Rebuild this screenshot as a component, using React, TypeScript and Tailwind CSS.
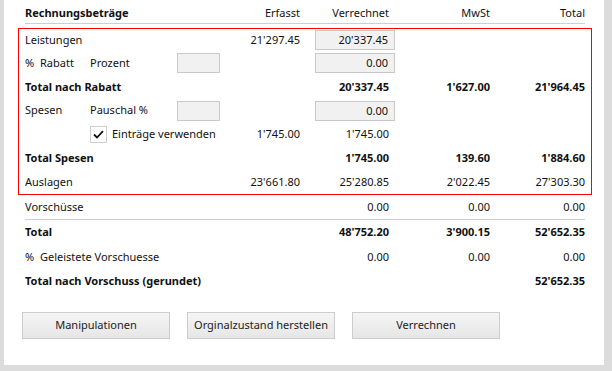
import React from "react";

type Row = {
  label: React.ReactNode;
  erfasst?: string;
  verrechnet?: string;
  mwst?: string;
  total?: string;
  bold?: boolean;
  box?: boolean;
  h: string;
};

function TextBox({ value }: { value?: string }) {
  return (
    <div className="h-[20px] w-[80px] border border-[#c9c9c9] bg-[#f1f1f1] pr-[6px] text-right leading-[18px]">
      {value}
    </div>
  );
}

function SmallBox() {
  return <div className="h-[20px] w-[43px] border border-[#c9c9c9] bg-[#f1f1f1]" />;
}

function Check() {
  return (
    <div className="flex h-[17px] w-[17px] shrink-0 items-center justify-center border border-[#cfcfcf] bg-white">
      <svg width="11" height="9" viewBox="0 0 11 9">
        <path d="M1 4.5 L4 7.5 L10 1.2" fill="none" stroke="#111" strokeWidth="1.8" />
      </svg>
    </div>
  );
}

function Line({ row }: { row: Row }) {
  const w = row.bold ? "font-bold" : "";
  return (
    <div className={`flex items-center whitespace-nowrap ${row.h} ${w}`}>
      <div className="flex w-[195px] items-center">{row.label}</div>
      <div className="w-[86px] pr-[6px] text-right">{row.erfasst}</div>
      <div className="flex w-[89px] justify-end">
        {row.box ? <TextBox value={row.verrechnet} /> : <span className="pr-[6px]">{row.verrechnet}</span>}
      </div>
      <div className="w-[95px] text-right">{row.mwst}</div>
      <div className="w-[95px] text-right">{row.total}</div>
    </div>
  );
}

const framed: Row[] = [
  { label: "Leistungen", erfasst: "21'297.45", verrechnet: "20'337.45", box: true, h: "h-[22px]" },
  {
    label: (
      <>
        <span className="w-[15px]">%</span>
        <span className="w-[50px]">Rabatt</span>
        <span className="w-[87px]">Prozent</span>
        <SmallBox />
      </>
    ),
    verrechnet: "0.00",
    box: true,
    h: "h-[24px]",
  },
  { label: "Total nach Rabatt", verrechnet: "20'337.45", mwst: "1'627.00", total: "21'964.45", bold: true, h: "h-[24px]" },
  {
    label: (
      <>
        <span className="w-[65px]">Spesen</span>
        <span className="w-[87px]">Pauschal %</span>
        <SmallBox />
      </>
    ),
    verrechnet: "0.00",
    box: true,
    h: "h-[23px]",
  },
  {
    label: (
      <>
        <span className="w-[65px]" />
        <Check />
        <span className="ml-[5px]">Einträge verwenden</span>
      </>
    ),
    erfasst: "1'745.00",
    verrechnet: "1'745.00",
    h: "h-[24px]",
  },
  { label: "Total Spesen", verrechnet: "1'745.00", mwst: "139.60", total: "1'884.60", bold: true, h: "h-[25px]" },
  { label: "Auslagen", erfasst: "23'661.80", verrechnet: "25'280.85", mwst: "2'022.45", total: "27'303.30", h: "h-[23px]" },
];

export default function App() {
  return (
    <div
      className="flex h-[371px] w-[612px] bg-[#dcdcdc] pb-[6px] pl-[4px] pr-[8px] text-[11px] text-[#111]"
      style={{ fontFamily: '"Segoe UI", "Noto Sans", sans-serif' }}
    >
      <div className="flex flex-1 flex-col bg-white pl-[14px] pt-[5px]">
        <div className="w-[574px]">
          <div className="mx-[7px] flex h-[19px] items-center border-b border-[#cfcfcf] pb-[2px]">
            <div className="w-[195px] font-bold">Rechnungsbeträge</div>
            <div className="w-[86px] pr-[6px] text-right">Erfasst</div>
            <div className="w-[89px] pr-[6px] text-right">Verrechnet</div>
            <div className="w-[95px] text-right">MwSt</div>
            <div className="w-[95px] text-right">Total</div>
          </div>
          <div className="mt-[4px] border border-[#ff0000] px-[6px]">
            {framed.map((r, i) => (
              <Line key={i} row={r} />
            ))}
          </div>
          <div className="px-[7px]">
            <div className="border-b border-[#cfcfcf]">
              <Line row={{ label: "Vorschüsse", verrechnet: "0.00", mwst: "0.00", total: "0.00", h: "h-[24px]" }} />
            </div>
            <Line row={{ label: "Total", verrechnet: "48'752.20", mwst: "3'900.15", total: "52'652.35", bold: true, h: "h-[25px]" }} />
            <Line
              row={{
                label: (
                  <>
                    <span className="w-[15px]">%</span>
                    <span>Geleistete Vorschuesse</span>
                  </>
                ),
                verrechnet: "0.00",
                mwst: "0.00",
                total: "0.00",
                h: "h-[24px]",
              }}
            />
            <Line row={{ label: "Total nach Vorschuss (gerundet)", total: "52'652.35", bold: true, h: "h-[24px]" }} />
          </div>
        </div>
        <div className="mt-[19px] flex gap-[17px] pl-[4px]">
          {["Manipulationen", "Orginalzustand herstellen", "Verrechnen"].map((t) => (
            <button
              key={t}
              className="h-[27px] w-[148px] whitespace-nowrap border border-[#cdcdcd] bg-gradient-to-b from-[#f5f5f5] to-[#e6e6e6] text-[11px] text-[#222]"
            >
              {t}
            </button>
          ))}
        </div>
      </div>
    </div>
  );
}
